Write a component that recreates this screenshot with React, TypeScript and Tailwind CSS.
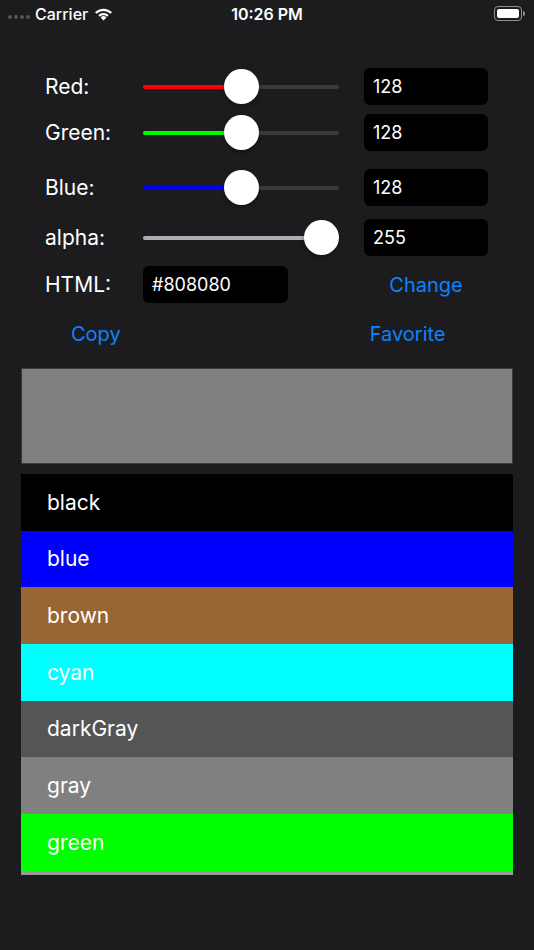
import React from 'react';

const font = { fontFamily: 'Inter, "Liberation Sans", sans-serif' };

const colors = [
  { name: 'black', bg: 'bg-[#000000]' },
  { name: 'blue', bg: 'bg-[#0000ff]' },
  { name: 'brown', bg: 'bg-[#996633]' },
  { name: 'cyan', bg: 'bg-[#00ffff]' },
  { name: 'darkGray', bg: 'bg-[#555555]' },
  { name: 'gray', bg: 'bg-[#808080]' },
  { name: 'green', bg: 'bg-[#00ff00]' },
];

function Slider({ value, minColor }: { value: number; minColor: string }) {
  const pct = value / 255;
  const left = 17.5 + pct * (196 - 35);
  return (
    <div className="relative w-[196px] h-[37px] flex items-center">
      <div className="w-full h-[4px] rounded-full bg-[#3a3a3c]" />
      <div
        className={`absolute left-0 h-[4px] rounded-full ${minColor}`}
        style={{ width: left }}
      />
      <div
        className="absolute w-[35px] h-[35px] rounded-full bg-white shadow-[0_2px_4px_rgba(0,0,0,0.35)]"
        style={{ left: left - 17.5 }}
      />
    </div>
  );
}

function Field({ value, width }: { value: string; width: string }) {
  return (
    <div className={`${width} h-[37px] rounded-[6px] bg-black flex items-center pl-[9px] text-[18px] text-white`}>
      {value}
    </div>
  );
}

function SliderRow({ label, minColor, value, mt }: { label: string; minColor: string; value: number; mt: string }) {
  return (
    <div className={`flex items-center ${mt}`}>
      <div className="w-[98px] text-[21px] text-white">{label}</div>
      <Slider value={value} minColor={minColor} />
      <div className="ml-[25px]">
        <Field value={String(value)} width="w-[124px]" />
      </div>
    </div>
  );
}

export default function App() {
  return (
    <div className="w-[534px] h-[950px] bg-[#1c1c1e] overflow-hidden" style={font}>
      {/* status bar */}
      <div className="h-[27px] flex items-center justify-between pl-[8px] pr-[9px] relative text-white">
        <div className="flex items-center">
          <div className="flex gap-[2px] mt-[7px]">
            {[0, 1, 2, 3].map(i => (
              <div key={i} className="w-[4px] h-[4px] rounded-full bg-[#555]" />
            ))}
          </div>
          <span className="ml-[5px] text-[16px] font-medium">Carrier</span>
          <svg className="ml-[6px]" width="19" height="14" viewBox="0 0 19 14">
            <path d="M9.5 13.5 L6.6 10.4 A4.2 4.2 0 0 1 12.4 10.4 Z" fill="white" />
            <path d="M4.3 8.1 A7.5 7.5 0 0 1 14.7 8.1 L13.2 9.7 A5.4 5.4 0 0 0 5.8 9.7 Z" fill="white" />
            <path d="M1 5.2 A12 12 0 0 1 18 5.2 L16.4 6.8 A9.8 9.8 0 0 0 2.6 6.8 Z" fill="white" />
          </svg>
        </div>
        <span className="absolute left-1/2 -translate-x-1/2 text-[16px] font-semibold">10:26 PM</span>
        <div className="flex items-center">
          <div className="w-[28px] h-[15px] rounded-[4px] border border-[#8e8e93] p-[2px]">
            <div className="w-full h-full rounded-[2px] bg-white" />
          </div>
          <div className="w-[2px] h-[5px] rounded-r-sm bg-[#8e8e93] ml-[1px]" />
        </div>
      </div>

      {/* controls */}
      <div className="pl-[45px] pt-[41px]">
        <SliderRow label="Red:" minColor="bg-[#ff0000]" value={128} mt="mt-0" />
        <SliderRow label="Green:" minColor="bg-[#00ff00]" value={128} mt="mt-[9px]" />
        <SliderRow label="Blue:" minColor="bg-[#0000ff]" value={128} mt="mt-[18px]" />
        <SliderRow label="alpha:" minColor="bg-[#aeaeb2]" value={255} mt="mt-[13px]" />
        <div className="flex items-center mt-[10px]">
          <div className="w-[98px] text-[21px] text-white">HTML:</div>
          <Field value="#808080" width="w-[145px]" />
          <div className="ml-[76px] w-[124px] text-center text-[20px] text-[#0a84ff]">Change</div>
        </div>
        <div className="flex items-center h-[37px] mt-[12px] text-[20px] text-[#0a84ff]">
          <span className="ml-[26px]">Copy</span>
          <span className="ml-[249px]">Favorite</span>
        </div>
      </div>

      {/* preview */}
      <div className="mx-[21px] mt-[16px] h-[96px] bg-[#808080] border border-[#3a3a3c]" />

      {/* color list */}
      <div className="mx-[21px] mt-[10px] h-[401px] overflow-hidden bg-[#9a9a9a]">
        {colors.map(c => (
          <div key={c.name} className={`h-[56.7px] ${c.bg} flex items-center pl-[26px] text-[21px] text-white`}>
            {c.name}
          </div>
        ))}
      </div>
    </div>
  );
}
